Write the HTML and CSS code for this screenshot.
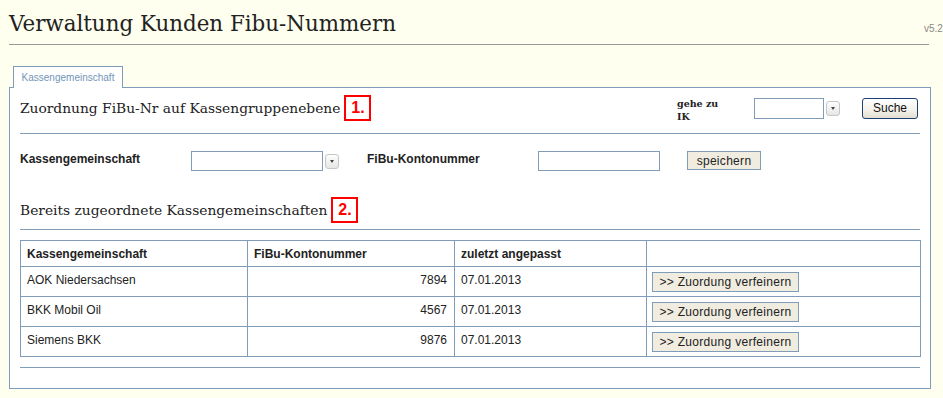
FILE: index.html
```html
<!DOCTYPE html>
<html lang="de">
<head>
<meta charset="utf-8">
<title>Verwaltung Kunden Fibu-Nummern</title>
<link rel="stylesheet" href="styles.css">
</head>
<body>
<div class="header">
  <h1 class="title">Verwaltung Kunden Fibu-Nummern</h1>
  <span class="version">v5.2</span>
</div>
<div class="tabs">
  <div class="tab">Kassengemeinschaft</div>
</div>
<div class="panel">
  <div class="row-head">
    <h2 class="heading">Zuordnung FiBu-Nr auf Kassengruppenebene</h2>
    <span class="mark">1.</span>
    <div class="search">
      <span class="goto">gehe zu<br>IK</span>
      <span class="select sel-ik"></span>
      <span class="dd"><span class="tri"></span></span>
      <button class="btn-suche">Suche</button>
    </div>
  </div>
  <div class="rule rule1"></div>
  <div class="form-row">
    <span class="label">Kassengemeinschaft</span>
    <span class="select sel-kg"></span>
    <span class="dd"><span class="tri"></span></span>
    <span class="label label2">FiBu-Kontonummer</span>
    <span class="select inp-konto"></span>
    <button class="btn btn-save">speichern</button>
  </div>
  <div class="row-head row-head2">
    <h2 class="heading">Bereits zugeordnete Kassengemeinschaften</h2>
    <span class="mark">2.</span>
  </div>
  <div class="rule rule2"></div>
  <table class="grid">
    <colgroup><col class="c1"><col class="c2"><col class="c3"><col class="c4"></colgroup>
    <thead>
      <tr><th>Kassengemeinschaft</th><th>FiBu-Kontonummer</th><th>zuletzt angepasst</th><th></th></tr>
    </thead>
    <tbody>
      <tr><td>AOK Niedersachsen</td><td class="num">7894</td><td>07.01.2013</td><td class="act"><button class="btn btn-fine">&gt;&gt; Zuordung verfeinern</button></td></tr>
      <tr><td>BKK Mobil Oil</td><td class="num">4567</td><td>07.01.2013</td><td class="act"><button class="btn btn-fine">&gt;&gt; Zuordung verfeinern</button></td></tr>
      <tr><td>Siemens BKK</td><td class="num">9876</td><td>07.01.2013</td><td class="act"><button class="btn btn-fine">&gt;&gt; Zuordung verfeinern</button></td></tr>
    </tbody>
  </table>
  <div class="rule rule3"></div>
</div>
</body>
</html>
```
FILE: styles.css
```css
* { box-sizing: border-box; }
body {
  margin: 0;
  background: #fffff0;
  font-family: "Liberation Sans", Arial, sans-serif;
  font-size: 12px;
  color: #222;
}
.header {
  display: flex;
  align-items: flex-start;
  padding-left: 9px;
}
.title {
  width: 920px;
  height: 45px;
  margin: 0;
  border-bottom: 1px solid #999;
  font-family: "DejaVu Serif", serif;
  font-weight: normal;
  font-size: 21.4px;
  line-height: 24px;
  padding-top: 12px;
  color: #222;
}
.version {
  margin-left: -5px;
  margin-top: 23px;
  font-size: 10px;
  color: #888;
}
.tabs {
  display: flex;
  padding-left: 13px;
  margin-top: 21px;
  position: relative;
  z-index: 1;
}
.tab {
  width: 110px;
  height: 22px;
  border: 1px solid #7f9db9;
  border-bottom: none;
  background: #fff;
  color: #7396b8;
  font-size: 10px;
  line-height: 22px;
  text-align: center;
}
.panel {
  width: 922px;
  margin-left: 9px;
  margin-top: -1px;
  height: 302px;
  border: 1px solid #7f9db9;
  background: #fff;
  padding: 0 10px;
}
.row-head {
  display: flex;
  align-items: center;
  height: 26px;
  margin-top: 7px;
}
.heading {
  margin: 0;
  font-family: "DejaVu Serif", serif;
  font-weight: normal;
  font-size: 13.8px;
  color: #222;
}
.mark {
  margin-left: 4px;
  width: 27px;
  height: 26px;
  border: 2px solid #ff0000;
  color: #ff0000;
  font-weight: bold;
  font-size: 16px;
  line-height: 22px;
  text-align: center;
}
.search {
  margin-left: auto;
  margin-right: 2px;
  display: flex;
  align-items: center;
}
.goto {
  width: 77px;
  font-family: "DejaVu Serif", serif;
  font-weight: bold;
  font-size: 9.5px;
  line-height: 13px;
  margin-top: 4px;
}
.select {
  display: block;
  height: 21px;
  border: 1px solid #7f9db9;
  background: #fff;
}
.sel-ik { width: 70px; }
.dd {
  display: flex;
  align-items: center;
  justify-content: center;
  width: 14px;
  height: 15px;
  margin-left: 2px;
  border: 1px solid #c6c6c6;
  border-radius: 3px;
  background: linear-gradient(#fdfdfd, #e6e6e6);
}
.tri {
  width: 0;
  height: 0;
  border-left: 2.5px solid transparent;
  border-right: 2.5px solid transparent;
  border-top: 3px solid #444;
}
.btn-suche {
  margin-left: 22px;
  width: 56px;
  height: 21px;
  border: 1px solid #1f3f70;
  border-radius: 3px;
  background: linear-gradient(#ffffff, #f3f1ea 60%, #e2ded2);
  font-family: "Liberation Sans", Arial, sans-serif;
  font-size: 12px;
  color: #111;
  padding: 0;
}
.rule {
  border-top: 1px solid #7f9db9;
}
.rule1 { margin-top: 12px; }
.form-row {
  display: flex;
  align-items: flex-start;
  margin-top: 17px;
  height: 20px;
}
.label {
  width: 171px;
  font-weight: bold;
  line-height: 14px;
  margin-top: 1px;
}
.label2 { width: 171px; margin-left: 28px; }
.sel-kg { width: 132px; height: 20px; }
.form-row .dd { margin-top: 3px; }
.inp-konto { width: 122px; height: 20px; }
.btn {
  height: 19px;
  border: 1px solid #7f9db9;
  background: #f0ece0;
  font-family: "Liberation Sans", Arial, sans-serif;
  font-size: 12px;
  color: #222;
  padding: 0;
  letter-spacing: 0.3px;
}
.btn-save {
  width: 74px;
  margin-left: 27px;
}
.row-head2 { margin-top: 26px; }
.rule2 { margin-top: 6px; }
.grid {
  margin-top: 10px;
  width: 900px;
  border-collapse: collapse;
  table-layout: fixed;
  border: 1px solid #7f9db9;
}
.c1 { width: 227px; }
.c2 { width: 207px; }
.c3 { width: 192px; }
.c4 { width: 274px; }
.grid th, .grid td {
  border: 1px solid #7f9db9;
  text-align: left;
  vertical-align: top;
  line-height: 14px;
  padding: 6px 7px 5px 6px;
}
.grid th { font-weight: bold; height: 26px; }
.grid td { height: 30px; }
.grid td.num { text-align: right; }
.grid td.act { padding: 5px 5px 4px 5px; }
.btn-fine {
  display: block;
  width: 147px;
  height: 20px;
}
.rule3 { margin-top: 10px; }
```
